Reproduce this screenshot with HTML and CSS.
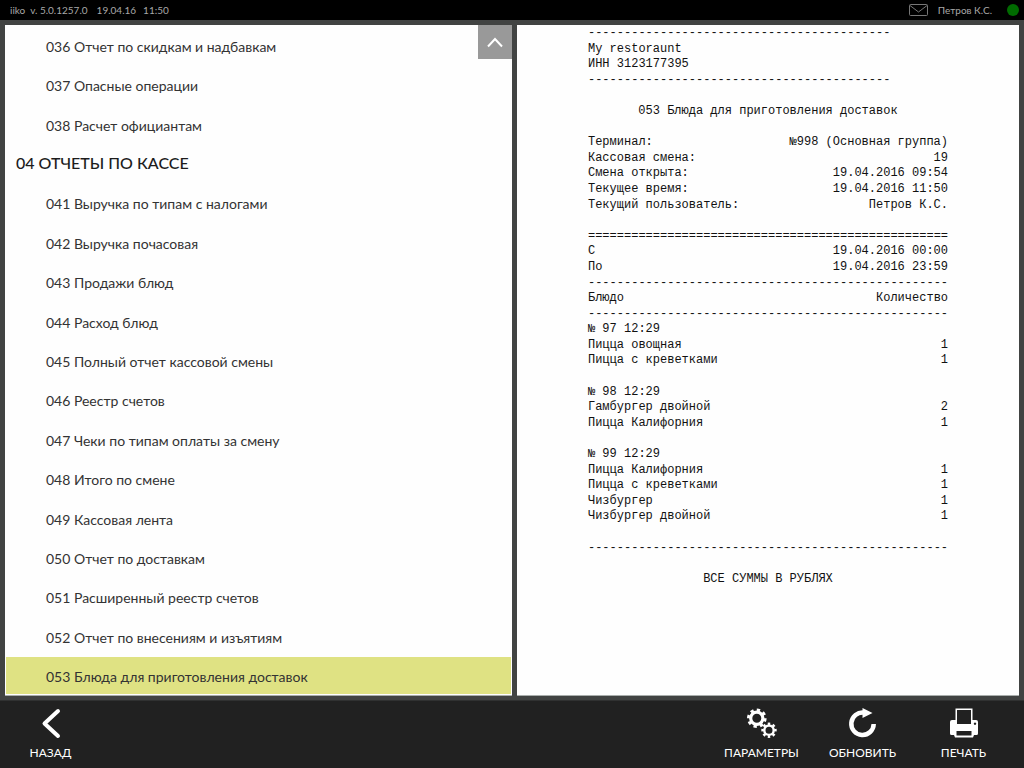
FILE: index.html
```html
<!DOCTYPE html>
<html lang="ru">
<head>
<meta charset="utf-8">
<title>iiko — Отчеты</title>
<link rel="stylesheet" href="styles.css">
</head>
<body>
<header class="topbar">
  <span class="version">iiko&nbsp; v. 5.0.1257.0</span>
  <span class="date">19.04.16</span>
  <span class="clock">11:50</span>
  <svg class="mail" width="20" height="13" viewBox="0 0 20 13" aria-hidden="true"><rect x="0.5" y="0.5" width="18" height="11" rx="1"/><path d="M1 1.500 9.500 8 18 1.500"/></svg>
  <span class="user">Петров К.С.</span>
  <span class="status"></span>
</header>
<main class="panels">
  <nav class="reports">
    <button class="report">036 Отчет по скидкам и надбавкам</button>
    <button class="report">037 Опасные операции</button>
    <button class="report">038 Расчет официантам</button>
    <h2 class="group">04 ОТЧЕТЫ ПО КАССЕ</h2>
    <button class="report">041 Выручка по типам с налогами</button>
    <button class="report">042 Выручка почасовая</button>
    <button class="report">043 Продажи блюд</button>
    <button class="report">044 Расход блюд</button>
    <button class="report">045 Полный отчет кассовой смены</button>
    <button class="report">046 Реестр счетов</button>
    <button class="report">047 Чеки по типам оплаты за смену</button>
    <button class="report">048 Итого по смене</button>
    <button class="report">049 Кассовая лента</button>
    <button class="report">050 Отчет по доставкам</button>
    <button class="report">051 Расширенный реестр счетов</button>
    <button class="report">052 Отчет по внесениям и изъятиям</button>
    <button class="report selected">053 Блюда для приготовления доставок</button>
    <button class="scroll-up" aria-label="Вверх"><svg width="18" height="12" viewBox="0 0 18 12"><path d="M2 10.500 9 3l7 7.500"/></svg></button>
  </nav>
  <section class="preview">
    <div class="receipt">
      <p>------------------------------------------</p>
      <p>My restoraunt</p>
      <p>ИНН 3123177395</p>
      <p>------------------------------------------</p>
      <h1 class="title">053 Блюда для приготовления доставок</h1>
      <p class="row"><span>Терминал:</span><span>№998 (Основная группа)</span></p>
      <p class="row"><span>Кассовая смена:</span><span>19</span></p>
      <p class="row"><span>Смена открыта:</span><span>19.04.2016 09:54</span></p>
      <p class="row"><span>Текущее время:</span><span>19.04.2016 11:50</span></p>
      <p class="row"><span>Текущий пользователь:</span><span>Петров К.С.</span></p>
      <p class="spaced">==================================================</p>
      <p class="row"><span>С</span><span>19.04.2016 00:00</span></p>
      <p class="row"><span>По</span><span>19.04.2016 23:59</span></p>
      <p>--------------------------------------------------</p>
      <table class="dishes">
        <thead>
          <tr><th>Блюдо</th><th>Количество</th></tr>
          <tr><td colspan="2">--------------------------------------------------</td></tr>
        </thead>
        <tbody>
          <tr><td colspan="2">№ 97 12:29</td></tr>
          <tr><td>Пицца овощная</td><td>1</td></tr>
          <tr><td>Пицца с креветками</td><td>1</td></tr>
        </tbody>
        <tbody>
          <tr class="order"><td colspan="2">№ 98 12:29</td></tr>
          <tr><td>Гамбургер двойной</td><td>2</td></tr>
          <tr><td>Пицца Калифорния</td><td>1</td></tr>
        </tbody>
        <tbody>
          <tr class="order"><td colspan="2">№ 99 12:29</td></tr>
          <tr><td>Пицца Калифорния</td><td>1</td></tr>
          <tr><td>Пицца с креветками</td><td>1</td></tr>
          <tr><td>Чизбургер</td><td>1</td></tr>
          <tr><td>Чизбургер двойной</td><td>1</td></tr>
        </tbody>
      </table>
      <p class="spaced">--------------------------------------------------</p>
      <p class="total">ВСЕ СУММЫ В РУБЛЯХ</p>
    </div>
  </section>
</main>
<footer class="actions">
  <button class="action back">
    <svg width="32" height="32" viewBox="0 0 32 32"><path class="chevron" d="M23 4 9.500 16.500 23 29"/></svg>
    <span>НАЗАД</span>
  </button>
  <button class="action">
    <svg width="32" height="32" viewBox="0 0 32 32">
      <g class="gear"><circle cx="10.800" cy="11.200" r="6.100" stroke-width="3.200"/><circle cx="10.800" cy="11.200" r="8.200" stroke-width="3.200" pathLength="16" stroke-dasharray="1 1" stroke-dashoffset="0"/>
      <circle cx="23" cy="23.200" r="4.700" stroke-width="2.400"/><circle cx="23" cy="23.200" r="6.400" stroke-width="2.600" pathLength="16" stroke-dasharray="1 1" stroke-dashoffset="0.500"/></g>
    </svg>
    <span>ПАРАМЕТРЫ</span>
  </button>
  <button class="action">
    <svg width="32" height="32" viewBox="0 0 32 32"><path class="arc" d="M17 5.700A11.200 11.200 0 1 0 26.700 17"/><path class="solid" d="M15.500 1 25.500 6 15.500 11z"/></svg>
    <span>ОБНОВИТЬ</span>
  </button>
  <button class="action">
    <svg width="32" height="32" viewBox="0 0 32 32"><path class="solid" fill-rule="evenodd" d="M7.500 1.500h17V13H28a2 2 0 0 1 2 2v11.500a1.500 1.500 0 0 1-1.500 1.500H26l-1 2.500H7L6 28H3.500A1.500 1.500 0 0 1 2 26.500V15a2 2 0 0 1 2-2h3.500zM9 3v14h14V3zM8.500 24v4.500h15V24zM27 15.500a1.200 1.200 0 1 0 .01 0z"/></svg>
    <span>ПЕЧАТЬ</span>
  </button>
</footer>
</body>
</html>
```
FILE: styles.css
```css
* { box-sizing: border-box; }
body {
  margin: 0;
  height: 100vh;
  display: flex;
  flex-direction: column;
  background: #414342;
  font-family: Lato, "Noto Sans", sans-serif;
}
button {
  border: 0;
  margin: 0;
  padding: 0;
  background: none;
  color: inherit;
  font: inherit;
}
svg { fill: none; display: block; }

.topbar {
  flex: none;
  height: 20px;
  padding: 0 5px 0 10px;
  display: flex;
  align-items: center;
  background: #000;
  color: #a8a8a8;
  font-size: 10px;
}
.date { margin-left: 9px; }
.clock { margin-left: 7px; }
.mail { margin-left: auto; stroke: #777; }
.user { margin-left: 9px; }
.status {
  width: 12px;
  height: 12px;
  margin-left: 15px;
  border-radius: 50%;
  background: #006b00;
}

.panels {
  flex: 1;
  min-height: 0;
  padding: 5px 5px 4px;
  display: grid;
  grid-template-columns: 507fr 502fr;
  gap: 5px;
}
.reports, .preview {
  background: #fefefe;
  border-bottom: 1px solid #a9aeac;
}
.reports {
  position: relative;
  display: flex;
  flex-direction: column;
}
.report, .group {
  flex: 1;
  margin: 0;
  border: 1px solid transparent;
  text-align: left;
  white-space: nowrap;
}
.report {
  padding: 3px 0 0 40px;
  color: #333;
  font-size: 14px;
}
.group {
  display: flex;
  align-items: center;
  padding: 1px 0 2px 10px;
  color: #1c1c1c;
  font-size: 16px;
  font-weight: 500;
}
.selected {
  background: #dfe283;
  background-clip: padding-box;
}
.scroll-up {
  position: absolute;
  top: 0;
  right: 0;
  width: 34px;
  height: 34px;
  display: grid;
  place-items: center;
  background: #999;
}
.scroll-up path { stroke: #fff; stroke-width: 2; }

.receipt {
  width: 50ch;
  margin: 0 auto;
  padding-top: 1px;
  color: #111;
  font-family: "Liberation Mono", monospace;
  font-size: 12px;
  line-height: 1.3;
  white-space: nowrap;
}
.receipt p { margin: 0; }
.receipt .title {
  margin: 1.3em 0;
  font-size: 12px;
  font-weight: 400;
  text-align: center;
}
.row { display: flex; justify-content: space-between; }
.receipt .spaced { margin-top: 1.3em; }
.receipt .total { margin-top: 1.3em; text-align: center; }
.dishes { width: 100%; border-collapse: collapse; }
.dishes th { font-weight: 400; text-align: left; }
.dishes th, .dishes td { padding: 0; }
.dishes th + th, .dishes td + td { text-align: right; }
.dishes .order td { padding-top: 1.3em; }

.actions {
  flex: none;
  height: 68px;
  padding-right: 10px;
  display: flex;
  background: #212121;
  border-top: 1px solid #303131;
  color: #fff;
}
.action {
  width: 101px;
  padding-top: 6px;
  display: flex;
  flex-direction: column;
  align-items: center;
  gap: 6px;
  font-size: 12px;
  line-height: 16px;
}
.back { margin-right: auto; }
.chevron { stroke: #fff; stroke-width: 4; stroke-linecap: round; stroke-linejoin: round; }
.gear { stroke: #fff; }
.arc { stroke: #fff; stroke-width: 4.500; }
.solid { fill: #fff; }
```
